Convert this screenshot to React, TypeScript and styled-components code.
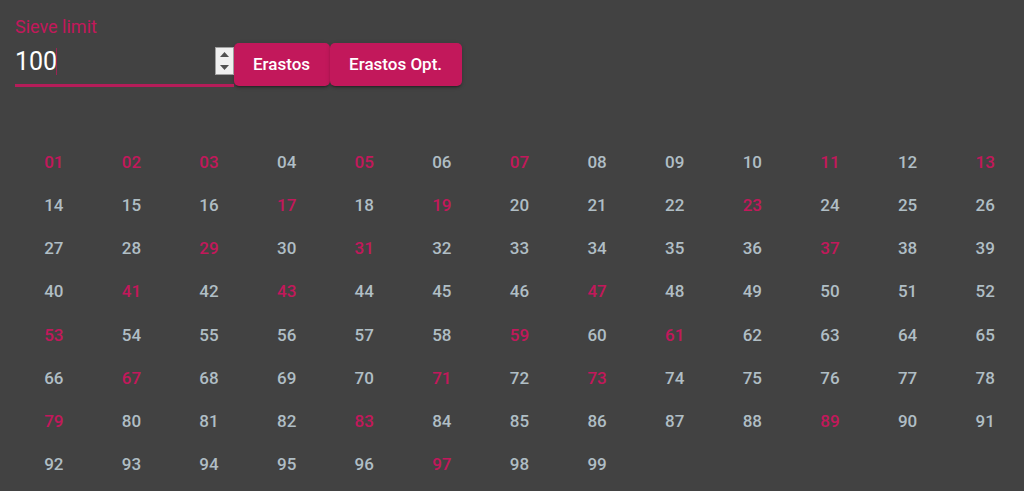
import React, { useState } from "react";
import styled, { createGlobalStyle } from "styled-components";

const accent = "#c2185b";

const GlobalStyle = createGlobalStyle`
  * { box-sizing: border-box; }
  body {
    margin: 0;
    background: #424242;
    font-family: Roboto, "Liberation Sans", sans-serif;
  }
`;

const Page = styled.main`
  display: flex;
  flex-direction: column;
  min-height: 100vh;
  padding: 17px 0 5px 15px;
`;

const Toolbar = styled.form`
  display: flex;
  align-items: flex-end;
  margin-bottom: 53px;
`;

const Field = styled.div`
  display: flex;
  flex-direction: column;
  width: 219px;
`;

const Label = styled.label`
  color: ${accent};
  font-size: 18px;
  line-height: 20px;
`;

const InputRow = styled.div`
  position: relative;
  display: flex;
  align-items: flex-start;
  height: 50px;
  padding-top: 10px;
  border-bottom: 3px solid #b51d59;
`;

const NumberInput = styled.input`
  flex: 1;
  min-width: 0;
  height: 30px;
  padding: 0;
  border: 0;
  outline: 0;
  background: transparent;
  color: #fff;
  caret-color: transparent;
  font: 400 25px/30px Roboto, "Liberation Sans", sans-serif;
  appearance: textfield;

  &::-webkit-inner-spin-button,
  &::-webkit-outer-spin-button {
    appearance: none;
    margin: 0;
  }
`;

const Caret = styled.span`
  position: absolute;
  top: 11px;
  left: 41px;
  width: 1px;
  height: 27px;
  background: ${accent};
  opacity: 0.7;
`;

const Spinner = styled.div`
  display: flex;
  flex-direction: column;
  width: 19px;
  height: 28px;
  border: 1px solid #a0a0a0;
  background: #efefef;
`;

const StepButton = styled.button`
  display: flex;
  flex: 1;
  align-items: center;
  justify-content: center;
  padding: 0;
  border: 0;
  background: transparent;
`;

const RunButton = styled.button`
  height: 43px;
  margin-bottom: 1px;
  padding: 0 20px 0 19px;
  border: 0;
  border-radius: 5px;
  background: ${accent};
  box-shadow: 0 3px 1px -2px rgba(0, 0, 0, 0.2), 0 2px 2px rgba(0, 0, 0, 0.14),
    0 1px 5px rgba(0, 0, 0, 0.12);
  color: #fff;
  font: 500 17px/43px Roboto, "Liberation Sans", sans-serif;
  white-space: nowrap;
`;

const NumberGrid = styled.section`
  display: grid;
  flex: 1;
  grid-template-columns: repeat(13, 1fr);
  grid-auto-rows: 1fr;
`;

const NumberCell = styled.span<{ $prime: boolean }>`
  display: flex;
  align-items: center;
  justify-content: center;
  color: ${({ $prime }) => ($prime ? accent : "#b0bec5")};
  font-size: 17px;
  font-weight: 500;
  line-height: 20px;
`;

function sieve(limit: number): boolean[] {
  const prime = new Array<boolean>(Math.max(limit, 0)).fill(true);
  for (let i = 2; i * i < limit; i++) {
    if (!prime[i]) continue;
    for (let j = i * i; j < limit; j += i) prime[j] = false;
  }
  return prime;
}

export default function App() {
  const [value, setValue] = useState("100");
  const [flags, setFlags] = useState(() => sieve(100));
  const run = () => setFlags(sieve(Math.min(Math.floor(Number(value)) || 0, 10000)));
  const step = (by: number) => setValue(String(Math.max(0, Number(value) + by)));

  return (
    <>
      <GlobalStyle />
      <Page>
        <Toolbar onSubmit={(e) => e.preventDefault()}>
          <Field>
            <Label htmlFor="limit">Sieve limit</Label>
            <InputRow>
              <NumberInput
                id="limit"
                type="number"
                value={value}
                onChange={(e) => setValue(e.target.value)}
              />
              <Caret />
              <Spinner>
                <StepButton type="button" aria-label="Increase" onClick={() => step(1)}>
                  <svg width="9" height="5" viewBox="0 0 9 5"><path d="M0 5 4.500 0 9 5z" fill="#505050" /></svg>
                </StepButton>
                <StepButton type="button" aria-label="Decrease" onClick={() => step(-1)}>
                  <svg width="9" height="5" viewBox="0 0 9 5"><path d="M0 0h9L4.500 5z" fill="#505050" /></svg>
                </StepButton>
              </Spinner>
            </InputRow>
          </Field>
          <RunButton type="button" onClick={run}>Erastos</RunButton>
          <RunButton type="button" onClick={run}>Erastos Opt.</RunButton>
        </Toolbar>
        <NumberGrid>
          {flags.slice(1).map((prime, i) => (
            <NumberCell key={i + 1} $prime={prime}>
              {String(i + 1).padStart(2, "0")}
            </NumberCell>
          ))}
        </NumberGrid>
      </Page>
    </>
  );
}
